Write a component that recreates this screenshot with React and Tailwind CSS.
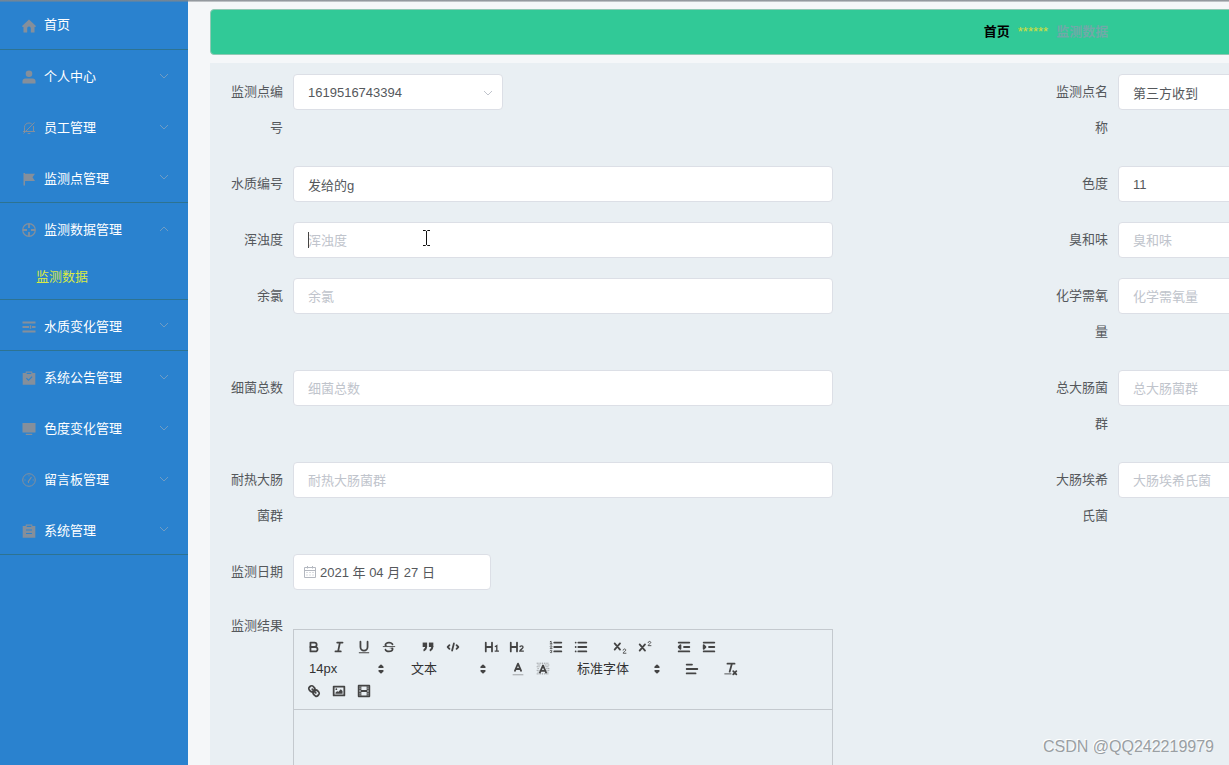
import { useState } from 'react'

const MENU = [
  { title: '首页', icon: 'home', leaf: true, line: true },
  { title: '个人中心', icon: 'user' },
  { title: '员工管理', icon: 'bell' },
  { title: '监测点管理', icon: 'flag', line: true },
  { title: '监测数据管理', icon: 'aim', children: ['监测数据'] },
  { title: '水质变化管理', icon: 'operation', line: true },
  { title: '系统公告管理', icon: 'claim' },
  { title: '色度变化管理', icon: 'platform' },
  { title: '留言板管理', icon: 'odometer' },
  { title: '系统管理', icon: 'order', line: true }
]

const FIELDS = [
  { id: 'pointNo', label: '监测点编号', type: 'select', value: '1619516743394' },
  { id: 'pointName', label: '监测点名称', value: '第三方收到' },
  { id: 'waterNo', label: '水质编号', value: '发给的g' },
  { id: 'chroma', label: '色度', value: '11' },
  { id: 'turbidity', label: '浑浊度', active: true },
  { id: 'smell', label: '臭和味' },
  { id: 'chlorine', label: '余氯' },
  { id: 'cod', label: '化学需氧量' },
  { id: 'bacteria', label: '细菌总数' },
  { id: 'coliform', label: '总大肠菌群' },
  { id: 'heatColiform', label: '耐热大肠菌群' },
  { id: 'ecoli', label: '大肠埃希氏菌' },
  { id: 'date', label: '监测日期', type: 'date', value: '2021 年 04 月 27 日' }
]

const MENU_ICONS = {
  home: <path d="M7 .5L.3 6.800V8H1.500v5.500h3.700V9.200a1.800 1.800 0 0 1 3.600 0v4.300h3.700V8h1.200V6.800z" />,
  user: (
    <>
      <circle cx="7" cy="3.800" r="3.300" />
      <path d="M.5 13.500v-2.500c0-1.600 1.200-2.600 2.800-2.600h7.400c1.600 0 2.800 1 2.800 2.600v2.500z" />
    </>
  ),
  bell: (
    <g fill="none" stroke="currentColor">
      <path d="M2.500 10.500V6.200C2.500 3.700 4.500 2 7 2c1 0 2 .3 2.700.8M11.500 5v5.500M1 10.500h12M5.700 12.500h2.600M1.500 12.500l11-11" />
    </g>
  ),
  flag: <path d="M1.500 1H3v.7h10L10.500 5.200 13 9H3v4.500H1.500z" />,
  aim: (
    <g fill="none" stroke="currentColor" strokeWidth="1.200">
      <circle cx="7" cy="7" r="6.300" />
      <path d="M7 1v4M7 9v4M1 7h4M9 7h4" strokeWidth="1.800" />
    </g>
  ),
  operation: <path d="M.5 1.500h13v2H.5zM.5 6h6.500v2H.5zM10 6h3.500v2H10zM7.800 5.200h1.400v3.600H7.800zM.5 10.500h13v2H.5z" />,
  claim: (
    <path
      fillRule="evenodd"
      d="M.7 2h3V.5h6.600V2h3v11.800H.7zM4.700 3h4.600V1.800H4.700zM4 7.500l2.500 2.500 4-4-.8-.8L6.500 8.400 4.800 6.700z"
    />
  ),
  platform: <path d="M.5 1h13v9.500H.5zM3.800 11.800h6.400V13H3.800z" />,
  odometer: (
    <g fill="none" stroke="currentColor">
      <circle cx="7" cy="7" r="6.300" />
      <path d="M6 9l3.500-5M2.500 7h1M7 2.500v.8M10.700 7h1M6 9.500h1" strokeWidth="1.200" />
    </g>
  ),
  order: <path fillRule="evenodd" d="M.7 2h3V.5h6.600V2h3v11.800H.7zM4 5.500v1.100h6V5.500zM4 9v1.100h6V9zM4.700 3h4.600V1.800H4.700z" />
}

const S = 'fill-none stroke-[#444] stroke-2 [stroke-linecap:round] [stroke-linejoin:round]'
const THIN = 'fill-none stroke-[#444] stroke-1 [stroke-linecap:round] [stroke-linejoin:round]'
const F = 'fill-[#444]'

const TOOL_ICONS = {
  粗体: (
    <>
      <path className={S} d="M5,4H9.500A2.500,2.500,0,0,1,12,6.500v0A2.500,2.500,0,0,1,9.500,9H5V4Z" />
      <path className={S} d="M5,9h5.500A2.500,2.500,0,0,1,13,11.500v0A2.500,2.500,0,0,1,10.500,14H5V9Z" />
    </>
  ),
  斜体: <path className={S} d="M7,4H13M5,14H11M8,14L10,4" />,
  下划线: (
    <>
      <path className={S} d="M5,3V9a4.012,4.012,0,0,0,4,4H9a4.012,4.012,0,0,0,4-4V3" />
      <rect className={F} height="1" rx="0.500" width="12" x="3" y="15" />
    </>
  ),
  删除线: (
    <>
      <path className={THIN} d="M15.500,8.500H2.500" />
      <path className={F} d="M9.007,8C6.542,7.791,6,7.519,6,6.500,6,5.792,7.283,5,9,5c1.571,0,2.765.679,2.969,1.309a1,1,0,0,0,1.900-.617C13.356,4.106,11.354,3,9,3,6.200,3,4,4.538,4,6.500a3.200,3.200,0,0,0,.5,1.843Z" />
      <path className={F} d="M8.984,10C11.457,10.208,12,10.479,12,11.500c0,0.708-1.283,1.500-3,1.500-1.571,0-2.765-.679-2.969-1.309a1,1,0,1,0-1.900.617C4.644,13.894,6.646,15,9,15c2.800,0,5-1.538,5-3.500a3.200,3.200,0,0,0-.5-1.843Z" />
    </>
  ),
  引用: (
    <>
      <rect className="fill-[#444] stroke-[#444] stroke-2" height="3" width="3" x="4" y="5" />
      <rect className="fill-[#444] stroke-[#444] stroke-2" height="3" width="3" x="11" y="5" />
      <path className="fill-[#444] stroke-[#444] stroke-2" d="M7,8c0,4.031-3,5-3,5M14,8c0,4.031-3,5-3,5" />
    </>
  ),
  代码块: <path className={S} d="M5,7L3,9L5,11M13,7L15,9L13,11M10,5L8,13" />,
  一级标题: (
    <>
      <path className={S} d="M2,4V14M9,4V14M2,9H9" />
      <path className="fill-none stroke-[#444] stroke-[1.500]" d="M12.200,8.700L14.400,7.500V13.700M12,13.700H16.800" />
    </>
  ),
  二级标题: (
    <>
      <path className={S} d="M2,4V14M9,4V14M2,9H9" />
      <path className="fill-none stroke-[#444] stroke-[1.500]" d="M12.200,9.200C12.500,7.200 15.800,7.200 15.800,9.200C15.800,10.700 12.500,12 12.200,13.700H16.700" />
    </>
  ),
  有序列表: (
    <>
      <path className={S} d="M7,4H15M7,9H15M7,14H15" />
      <path className={THIN} d="M2.500,5.500H4.500M3.500,5.500V2.500L2.500,3" />
      <path className={THIN} d="M4.500,10.500h-2c0-.234,1.850-1.076,1.850-2.234A.959.959,0,0,0,2.500,8.156" />
      <path className={THIN} d="M2.500,14.846a.959.959,0,0,0,1.850-.109A.7.700,0,0,0,3.750,14a.688.688,0,0,0,.6-.736.959.959,0,0,0-1.850-.109" />
    </>
  ),
  无序列表: <path className={S} d="M6,4H15M6,9H15M6,14H15M3,4H3M3,9H3M3,14H3" />,
  下标: (
    <>
      <path className={S} d="M3,5L9,12M9,5L3,12" />
      <path className={THIN} d="M12.500,12.500c0-1.800,3-1.800,3,0c0,1.200-3,2-3,3.500h3.200" />
    </>
  ),
  上标: (
    <>
      <path className={S} d="M3,6L9,13M9,6L3,13" />
      <path className={THIN} d="M12.500,4c0-1.800,3-1.800,3,0c0,1.200-3,2-3,3.500h3.200" />
    </>
  ),
  减少缩进: (
    <>
      <path className={S} d="M3,14H15M3,4H15M9,9H15" />
      <path className="fill-[#444] stroke-[#444] stroke-2 [stroke-linejoin:round]" d="M5,7V11L3,9Z" />
    </>
  ),
  增加缩进: (
    <>
      <path className={S} d="M3,14H15M3,4H15M9,9H15" />
      <path className="fill-[#444] stroke-[#444] stroke-2 [stroke-linejoin:round]" d="M3,7V11L5,9Z" />
    </>
  ),
  文字颜色: (
    <>
      <path className="fill-none stroke-[#444] stroke-1 opacity-50" d="M3,15.500H15" />
      <path className={S} d="M5.500,11L9,3L12.500,11M11.600,9H6.400" />
    </>
  ),
  背景颜色: (
    <>
      <path className="fill-none stroke-[#444] stroke-1 opacity-70 [stroke-dasharray:1_1]" d="M2,2.500H16M3,4.500H7M11,4.500H16M2,6.500H6M12,6.500H16M3,8.500H5M13,8.500H16M2,10.500H5M13,10.500H16M3,12.500H4M14,12.500H16M2,14.500H16" />
      <path className={S} d="M5.500,13L9,5L12.500,13M11.600,11H6.400" />
    </>
  ),
  对齐: <path className={S} d="M3,9H15M3,14H13M3,4H9" />,
  清除格式: (
    <>
      <path className={S} d="M5,3H13M7.500,12L10,3M11.500,11.500L15,15M15,11.500L11.500,15" />
      <path className={THIN} d="M2,14.500H9" />
    </>
  ),
  链接: (
    <>
      <path className={S} d="M7,7L11,11" />
      <path className={S} d="M8.900,4.577a3.476,3.476,0,0,1,.36,4.679A3.476,3.476,0,0,1,4.577,8.900C3.185,7.500,2.035,6.400,4.217,4.217S7.500,3.185,8.900,4.577Z" />
      <path className={S} d="M13.423,9.100a3.476,3.476,0,0,0-4.679-.36,3.476,3.476,0,0,0,.36,4.679c1.392,1.392,2.500,2.542,4.679.360S14.815,10.500,13.423,9.100Z" />
    </>
  ),
  图片: (
    <>
      <rect className={S} height="10" width="12" x="3" y="4" />
      <circle className={F} cx="6" cy="7" r="1" />
      <path className={F} d="M5,12V11L7,9L8,10L11,7L13,9V12Z" />
    </>
  ),
  视频: (
    <>
      <rect className={S} height="12" width="12" x="3" y="3" />
      <path className={F} d="M5,3h1v12H5zM12,3h1v12h-1zM5,8h8v2H5zM3,5h3v1H3zM3,7h3v1H3zM3,10h3v1H3zM3,12h3v1H3zM12,5h3v1h-3zM12,7h3v1h-3zM12,10h3v1h-3zM12,12h3v1h-3z" />
    </>
  )
}

function Chevron({ up, className }) {
  return (
    <svg viewBox="0 0 10 6" className={className} fill="none" stroke="currentColor">
      <path d={up ? 'M1 5l4-4 4 4' : 'M1 1l4 4 4-4'} />
    </svg>
  )
}

function Sidebar() {
  return (
    <nav className="w-[188px] shrink-0 bg-[#2a82cf] text-white">
      <ul>
        {MENU.map((m) => (
          <li key={m.title} className={m.line || m.children ? 'border-b border-[#2d7391]' : ''}>
            <a href="#" className={`flex items-center pl-[22px] pr-[19px] ${m.leaf ? 'h-[49px]' : m.line ? 'h-[50px]' : 'h-[51px]'}`}>
              <svg viewBox="0 0 14 14" className="mt-[3px] mr-2 h-[14px] w-[14px] text-[#858f9b]" fill="currentColor">
                {MENU_ICONS[m.icon]}
              </svg>
              <span className={m.leaf ? 'flex-1' : 'flex-1 pt-[3px]'}>{m.title}</span>
              {!m.leaf && <Chevron up={!!m.children} className="h-[6px] w-[10px] text-[#6f9cc4]" />}
            </a>
            {m.children?.map((c) => (
              <a key={c} href="#" className="flex h-[45px] items-center pl-9 text-[#d9ea45]">
                {c}
              </a>
            ))}
          </li>
        ))}
      </ul>
    </nav>
  )
}

function CalendarIcon() {
  return (
    <svg viewBox="0 0 12 12" className="mr-1 h-3 w-3 shrink-0 text-[#b4b8c0]" fill="none" stroke="currentColor">
      <path d="M.5 1.500h11v10H.5zM.5 4.500h11M3.500 0v2.500M8.500 0v2.500M2.500 6.500h1M5.500 6.500h1M8.500 6.500h1M2.500 9h1M5.500 9h1M8.500 9h1" />
    </svg>
  )
}

function TextCursor() {
  return (
    <svg viewBox="0 0 9 16" className="pointer-events-none absolute top-2 left-[129px] h-4 w-[9px]" fill="none" stroke="#111">
      <path d="M1 .5h2.500l1 1 1-1H8M4.500 1v14M1 15.500h2.500l1-1 1 1H8" />
    </svg>
  )
}

const BOX = 'h-9 rounded border border-[#dcdfe6] bg-white'

function Field({ field }) {
  const [value, setValue] = useState(field.value || '')
  const onChange = (e) => setValue(e.target.value)

  return (
    <div className="flex items-start">
      <label htmlFor={field.id} className="w-[72px] shrink-0 pr-[10px] text-right leading-9 text-[#55585c]">
        {field.label}
      </label>
      {field.type === 'select' && (
        <div className="relative w-[210px]">
          <select id={field.id} value={value} onChange={onChange} className={`${BOX} w-full appearance-none px-[14px] pt-px`}>
            <option>{field.value}</option>
          </select>
          <Chevron className="pointer-events-none absolute top-4 right-[10px] h-[6px] w-[10px] text-[#c0c4cc]" />
        </div>
      )}
      {field.type === 'date' && (
        <div className={`${BOX} flex w-[198px] items-center pl-[10px]`}>
          <CalendarIcon />
          <input id={field.id} value={value} onChange={onChange} className="w-full min-w-0 bg-transparent pt-px" />
        </div>
      )}
      {!field.type && (
        <div className="relative w-[540px]">
          <input
            id={field.id}
            value={value}
            onChange={onChange}
            placeholder={field.label}
            className={`${BOX} w-full px-[14px] placeholder:text-[#c0c4cc]`}
          />
          {field.active && (
            <>
              <span className="pointer-events-none absolute top-[10px] left-[15px] h-4 w-px bg-[#444]" />
              <TextCursor />
            </>
          )}
        </div>
      )}
    </div>
  )
}

function Tools({ names }) {
  return (
    <div className="flex">
      {names.map((n) => (
        <button key={n} type="button" title={n} className="flex h-[22px] w-[25px] items-center justify-center">
          <svg viewBox="0 0 18 18" className="h-4 w-4">
            {TOOL_ICONS[n]}
          </svg>
        </button>
      ))}
    </div>
  )
}

function Picker({ label, value, className }) {
  return (
    <div className={`relative h-[22px] ${className}`}>
      <select aria-label={label} className="h-full w-full appearance-none bg-transparent pl-2 text-[#333]">
        <option>{value}</option>
      </select>
      <svg viewBox="0 0 18 18" className="pointer-events-none absolute top-[3px] right-0 h-4 w-4">
        <path className="fill-[#444] stroke-[#444] stroke-2 [stroke-linejoin:round]" d="M7,11L9,13L11,11ZM7,7L9,5L11,7Z" />
      </svg>
    </div>
  )
}

function Editor() {
  return (
    <div className="mt-[19px] w-[540px] border border-[#c4c9ce]">
      <div className="border-b border-[#c4c9ce] px-[7px] pt-[6px] pb-[7px]">
        <div className="flex gap-[14px]">
          <Tools names={['粗体', '斜体', '下划线', '删除线']} />
          <Tools names={['引用', '代码块']} />
          <Tools names={['一级标题', '二级标题']} />
          <Tools names={['有序列表', '无序列表']} />
          <Tools names={['下标', '上标']} />
          <Tools names={['减少缩进', '增加缩进']} />
        </div>
        <div className="flex gap-[14px]">
          <Picker label="字号" value="14px" className="w-[88px]" />
          <Picker label="段落" value="文本" className="w-[88px]" />
          <Tools names={['文字颜色', '背景颜色']} />
          <Picker label="字体" value="标准字体" className="w-[96px]" />
          <Tools names={['对齐']} />
          <Tools names={['清除格式']} />
        </div>
        <Tools names={['链接', '图片', '视频']} />
      </div>
      <div id="result" role="textbox" aria-labelledby="result-label" contentEditable suppressContentEditableWarning className="min-h-[360px] p-3 outline-none" />
    </div>
  )
}

export default function App() {
  return (
    <div className="relative flex h-screen overflow-hidden bg-[#f5f7f9] font-['Liberation_Sans','Noto_Sans_CJK_SC',sans-serif] text-[13px] text-[#55585c]">
      <div className="absolute inset-x-0 top-0 h-[2px] bg-gradient-to-b from-[#80868c] to-[#80868c]/30" />
      <Sidebar />

      <main className="min-w-0 flex-1 overflow-hidden pt-[9px] pl-[22px]">
        {/* Wide form, scrolls off the right edge on small windows */}
        <div className="min-w-[1672px]">
          <header className="flex h-[46px] items-center justify-center gap-2 rounded border border-[#8fc9b4] bg-[#31c997]">
            <a href="#" className="font-bold text-black">首页</a>
            <span className="text-[#d5df3c]">******</span>
            <span className="font-bold text-[#6faaa8]">监测数据</span>
          </header>

          <form className="mt-2 bg-[#e9eff3] p-[11px]">
            <div className="grid grid-cols-2 gap-y-5">
              {FIELDS.map((f) => (
                <Field key={f.id} field={f} />
              ))}
            </div>
            <div className="mt-5 flex items-start">
              <span id="result-label" className="w-[72px] shrink-0 pr-[10px] text-right leading-8">监测结果</span>
              <Editor />
            </div>
          </form>
        </div>
      </main>

      <div className="pointer-events-none absolute right-[15px] bottom-[6px] text-base text-[#9a9fa3] [text-shadow:-1px_-1px_0_#fff]">
        CSDN @QQ242219979
      </div>
    </div>
  )
}
